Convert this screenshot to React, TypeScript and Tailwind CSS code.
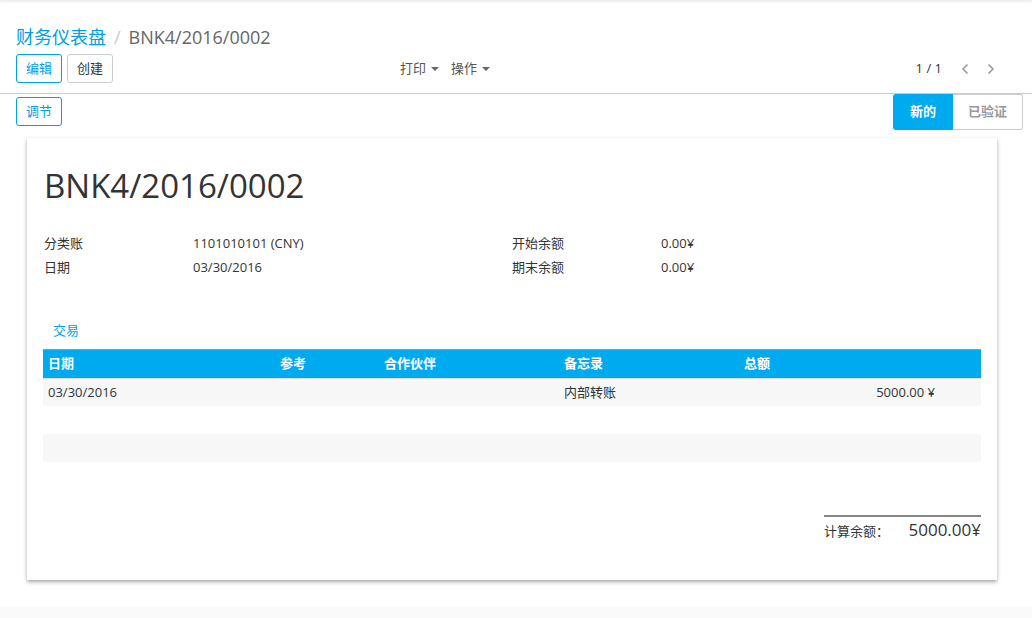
import { ChevronLeft, ChevronRight } from 'lucide-react';

const font = { fontFamily: '"Open Sans", "Noto Sans CJK SC", sans-serif' };

const cols = 'grid grid-cols-[232px_104px_180px_180px_200px_42px]';

const Caret = () => (
  <span className="ml-[5px] inline-block w-0 h-0 border-x-[4px] border-x-transparent border-t-[4px] border-t-[#666] align-middle" />
);

const Field = ({ label, value }: { label: string; value: string }) => (
  <div className="flex h-[24px] items-center">
    <span className="w-[149px] text-[#333]">{label}</span>
    <span className="text-[#333]">{value}</span>
  </div>
);

export default function App() {
  return (
    <div style={font} className="w-[1032px] h-[618px] bg-white text-[13px] text-[#333] flex flex-col overflow-hidden">
      {/* control panel */}
      <div className="shadow-[inset_0_4px_4px_-3px_rgba(0,0,0,0.12)] border-b border-[#ccc] px-[16px] pt-[24px] pb-[10px]">
        <div className="flex items-center h-[26px] text-[18px]">
          <span className="text-[#00a0e4]">财务仪表盘</span>
          <span className="text-[#ccc] mx-[8px]">/</span>
          <span className="text-[#666]">BNK4/2016/0002</span>
        </div>
        <div className="flex items-center mt-[4px] h-[29px]">
          <div className="flex gap-[5px] w-[380px]">
            <button className="h-[29px] w-[46px] rounded-[3px] border border-[#00a0e4] text-[#00a0e4] bg-white">编辑</button>
            <button className="h-[29px] w-[46px] rounded-[3px] border border-[#ccc] text-[#333] bg-white">创建</button>
          </div>
          <div className="flex items-center gap-[12px] text-[#555] ml-[4px]">
            <span className="flex items-center">打印<Caret /></span>
            <span className="flex items-center">操作<Caret /></span>
          </div>
          <div className="ml-auto flex items-center text-[#333] mr-[12px]">
            <span className="mr-[10px]">1 / 1</span>
            <ChevronLeft size={16} strokeWidth={2.5} className="text-[#999] mx-[5px]" />
            <ChevronRight size={16} strokeWidth={2.5} className="text-[#999] mx-[5px]" />
          </div>
        </div>
      </div>

      {/* status bar */}
      <div className="flex items-start pl-[16px] pr-[9px] h-[36px]">
        <button className="mt-[3px] h-[29px] w-[46px] rounded-[3px] border border-[#00a0e4] text-[#00a0e4] bg-white">调节</button>
        <div className="ml-auto flex h-[36px]">
          <span className="w-[60px] flex items-center justify-center bg-[#00aaef] text-white font-semibold rounded-l-[3px]">新的</span>
          <span className="w-[70px] flex items-center justify-center border border-l-0 border-[#ccc] text-[#999] font-semibold rounded-r-[3px]">已验证</span>
        </div>
      </div>

      {/* sheet */}
      <div className="flex-1 flex flex-col pb-[12px]">
        <div className="ml-[27px] mt-[8px] w-[970px] h-[442px] bg-white shadow-[0_2px_4px_rgba(0,0,0,0.35)] pl-[17px] pr-[16px] pt-[26px] flex flex-col">
          <h1 className="text-[33px] leading-[44px] text-[#333]">BNK4/2016/0002</h1>
          <div className="flex mt-[24px]">
            <div className="w-[468px]">
              <Field label="分类账" value="1101010101 (CNY)" />
              <Field label="日期" value="03/30/2016" />
            </div>
            <div>
              <Field label="开始余额" value="0.00¥" />
              <Field label="期末余额" value="0.00¥" />
            </div>
          </div>

          <div className="mt-[40px] ml-[9px] text-[#00a0e4] h-[20px] leading-[20px]">交易</div>

          <div className="mt-[9px] -ml-[1px]">
            <div className={`${cols} h-[29px] items-center bg-[#00aaef] border-t border-[#999] text-white font-bold`}>
              <span className="pl-[5px]">日期</span>
              <span className="pl-[5px]">参考</span>
              <span className="pl-[5px]">合作伙伴</span>
              <span className="pl-[5px]">备忘录</span>
              <span className="pl-[5px]">总额</span>
              <span />
            </div>
            <div className={`${cols} h-[28px] items-center bg-[#f7f7f7] border-t border-[#ddd]`}>
              <span className="pl-[5px]">03/30/2016</span>
              <span />
              <span />
              <span className="pl-[5px]">内部转账</span>
              <span className="text-right pr-[4px]">5000.00 ¥</span>
              <span />
            </div>
            <div className="h-[28px] bg-white" />
            <div className="h-[28px] bg-[#f7f7f7]" />
          </div>

          <div className="mt-[53px] self-end w-[157px] border-t-2 border-[#888] flex items-end justify-between pt-[1px]">
            <span className="text-[#333] mb-[1px]">计算余额：</span>
            <span className="text-[17px] leading-[24px] text-[#333]">5000.00¥</span>
          </div>
        </div>
      </div>
      <div className="h-[11px] bg-[#fafafa]" />
    </div>
  );
}
